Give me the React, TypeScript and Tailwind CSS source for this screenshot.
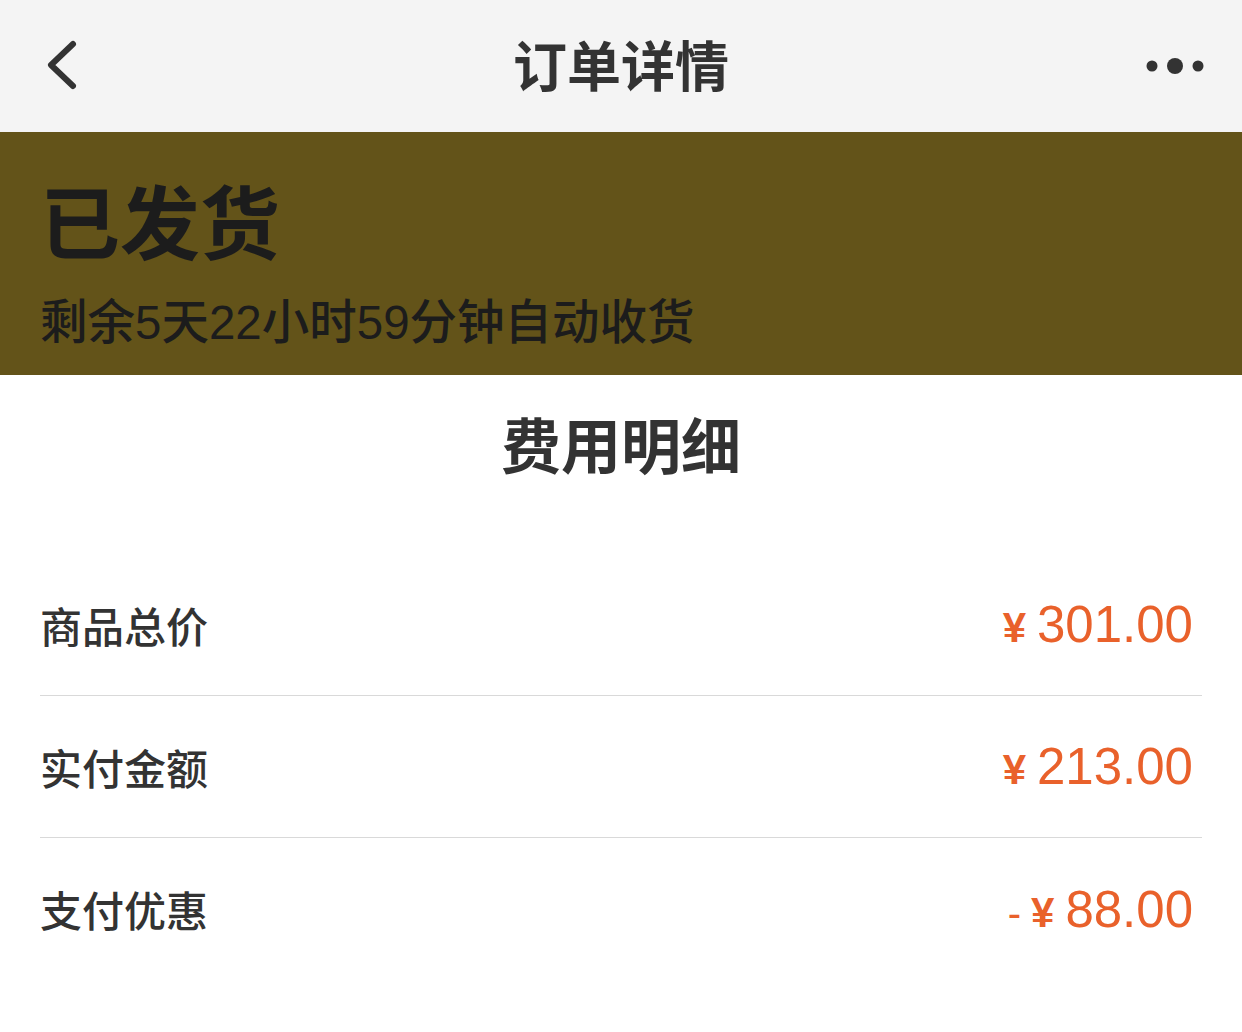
import React from "react";

const font = { fontFamily: '"Noto Sans CJK SC", "Noto Sans", sans-serif' };
const latin = { fontFamily: '"Liberation Sans", "Noto Sans CJK SC", sans-serif' };

function Row({ label, amount, minus, last }: { label: string; amount: string; minus?: boolean; last?: boolean }) {
  return (
    <div className={`mx-[40px] h-[142px] flex items-center justify-between ${last ? "" : "border-b border-[#d9d9d9]"}`}>
      <span className="text-[42px] font-medium text-[#333333] leading-none">{label}</span>
      <span className="flex items-baseline text-[#e9612b] leading-none pr-[9px]" style={latin}>
        {minus && <span className="text-[40px] mr-[10px]">-</span>}
        <span className="text-[42px] font-bold mr-[11px]">¥</span>
        <span className="text-[51px]">{amount}</span>
      </span>
    </div>
  );
}

function N({ children }: { children: React.ReactNode }) {
  return <span className="font-normal" style={latin}>{children}</span>;
}

export default function App() {
  return (
    <div className="w-[1242px] h-[1032px] bg-white overflow-hidden" style={font}>
      <div className="h-[132px] bg-[#f4f4f4] flex items-center justify-between px-[40px] relative">
        <svg width="40" height="56" viewBox="0 0 40 56" className="ml-[3px]">
          <path d="M30 6 L8 27 L30 48" fill="none" stroke="#333" strokeWidth="6" strokeLinecap="round" strokeLinejoin="round" />
        </svg>
        <div className="absolute left-0 right-0 text-center text-[54px] font-semibold text-[#333333] leading-none pointer-events-none mt-[-4px]">订单详情</div>
        <svg width="64" height="24" viewBox="0 0 64 24" className="mr-[-5px]">
          <circle cx="9" cy="12" r="5.5" fill="#333" />
          <circle cx="32" cy="12" r="8" fill="#333" />
          <circle cx="55" cy="12" r="5.5" fill="#333" />
        </svg>
      </div>
      <div className="h-[243px] bg-[#635319] px-[40px] pt-[46px]">
        <div className="text-[80px] font-bold text-[#1c1c1c] leading-none">已发货</div>
        <div className="mt-[37px] text-[47.5px] font-medium text-[#1c1c1c] leading-none">
          剩余<N>5</N>天<N>22</N>小时<N>59</N>分钟自动收货
        </div>
      </div>
      <div className="h-[179px] pt-[38px] text-center">
        <div className="text-[60px] font-bold text-[#333333] leading-none">费用明细</div>
      </div>
      <Row label="商品总价" amount="301.00" />
      <Row label="实付金额" amount="213.00" />
      <Row label="支付优惠" amount="88.00" minus last />
    </div>
  );
}
